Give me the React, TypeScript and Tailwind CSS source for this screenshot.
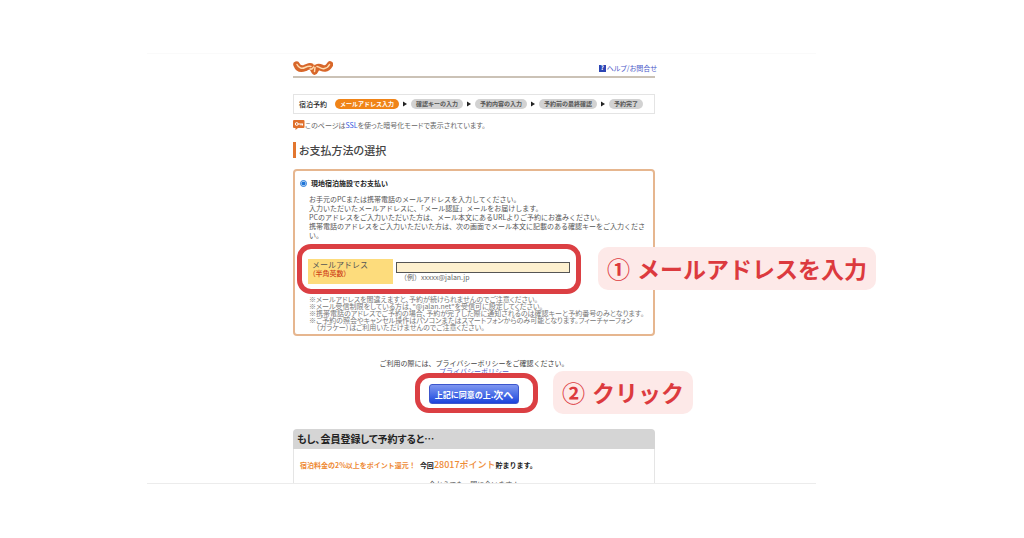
import type { ReactNode } from "react";

const STEPS = ["メールアドレス入力", "確認キーの入力", "予約内容の入力", "予約前の最終確認", "予約完了"];

function JalanLogo() {
  return (
    <svg viewBox="0 0 40 14" className="h-3.5 w-10" fill="none" strokeLinecap="round" strokeLinejoin="round" role="img" aria-label="じゃらん">
      <path
        d="M3.500 3.500C5 7.500 8 8.500 12 7C15 5.500 17 4.500 19 6L21.500 10.500L24 6.500C27 4.500 29 8 32 7.500C35 7 36 5 37 3.500"
        stroke="#d8672a"
        strokeWidth="6.500"
      />
      <path d="M4 3.500C6 7.500 9 8 12 6.500C14 5.500 16 4.500 18 5.500M17 8C19 8.500 20 7.500 20.500 6M22 6.500L21.500 10.500M24 5.500C27 6 28 8.500 31.500 7.500C34 7 35.500 5.500 36.500 3.500" stroke="#ffdcb0" strokeWidth="1.500" />
      <path d="M21 3v1" stroke="#ffdcb0" strokeWidth="1" />
    </svg>
  );
}

function KeyBubble() {
  return (
    <svg viewBox="0 0 12 10" className="h-2.5 w-3 shrink-0" aria-hidden="true">
      <path d="M1 0h9.500a1 1 0 0 1 1 1v6a1 1 0 0 1-1 1H5L2.500 10V8H1a1 1 0 0 1-1-1V1a1 1 0 0 1 1-1z" fill="#e0702c" />
      <circle cx="3.700" cy="4" r="1.400" fill="none" stroke="#fff" />
      <path d="M5 4h5M8 4v1.500M9.500 4v1.500" stroke="#fff" fill="none" />
    </svg>
  );
}

function Steps() {
  return (
    <nav className="mt-4 flex h-5 items-center border border-[#e4e4e4] pl-[5px] text-[7px] leading-[9px]">
      <span className="mr-2 font-medium text-[#222]">宿泊予約</span>
      <ol className="flex items-center text-[6px] font-bold">
        {STEPS.map((step, i) => (
          <li key={step} className="flex items-center">
            {i > 0 && (
              <svg viewBox="0 0 4 6" className="mx-1 h-1.5 w-1" aria-hidden="true">
                <path d="M0 0.500L4 3L0 5.500z" fill="#222" />
              </svg>
            )}
            <span
              className={
                i === 0
                  ? "rounded-full bg-[#f08418] px-[5px] py-px leading-[8px] text-white"
                  : "rounded-full bg-[#d2d2d2] px-[5px] py-px leading-[8px] text-[#555]"
              }
            >
              {step}
            </span>
          </li>
        ))}
      </ol>
    </nav>
  );
}

function Callout({ mark, children }: { mark: string; children: ReactNode }) {
  return (
    <p className="flex h-[43px] items-center gap-[7px] whitespace-nowrap rounded-[10px] bg-[#fde9e8] px-[9px] text-[23px] leading-none font-bold text-[#dc3a3e]">
      <span>{mark}</span>
      <span>{children}</span>
    </p>
  );
}

function PaymentForm() {
  return (
    <section className="mt-[11px] rounded border-2 border-[#e6b68f] pt-2 pr-2 pb-[3px] pl-[13px]">
      <label className="-ml-2 flex h-[9px] items-center gap-1 text-[7px] leading-[9px] font-bold text-[#222]">
        <input type="radio" name="payment" defaultChecked className="size-[7px] accent-[#1f75d8]" />
        現地宿泊施設でお支払い
      </label>
      <p className="mt-[7px] ml-px text-[7px] leading-[9px] text-[#555]">
        お手元のPCまたは携帯電話のメールアドレスを入力してください。
        <br />
        入力いただいたメールアドレスに、「メール認証」メールをお届けします。
        <br />
        PCのアドレスをご入力いただいた方は、メール本文にあるURLよりご予約にお進みください。
        <br />
        携帯電話のアドレスをご入力いただいた方は、次の画面でメール本文に記載のある確認キーをご入力ください。
      </p>

      <div className="relative mt-[19px] mr-[75px] flex gap-[3px]">
        <label htmlFor="email" className="flex h-[25px] w-[85px] shrink-0 flex-col bg-[#fddc7c] pt-0.5 pl-1 text-[8px] leading-[8px] text-[#555]">
          メールアドレス
          <span className="text-[7px] font-medium text-[#d0451b] [font-feature-settings:'palt']">（半角英数）</span>
        </label>
        <div className="flex-1 pt-[3px]">
          <input
            id="email"
            type="email"
            className="block h-[11px] w-full border border-[#555] bg-[#fdf0cf] px-1 text-[7px]"
          />
          <p className="pl-1 text-[7px] leading-[9px] text-[#666]">（例）xxxxx@jalan.jp</p>
        </div>
        <div className="pointer-events-none absolute -inset-x-[11px] -top-[15px] -bottom-[10px] rounded-[14px] border-[5px] border-[#db3f43]" />
        <div className="absolute -top-3 left-full ml-7">
          <Callout mark="①">メールアドレスを入力</Callout>
        </div>
      </div>

      <ul className="mt-3 ml-px text-[7px] leading-[7px] text-[#777] [font-feature-settings:'palt']">
        <li>※メールアドレスを間違えますと、予約が続けられませんのでご注意ください。</li>
        <li>※メール受信制限をしている方は、"@jalan.net"を受信可に設定してください。</li>
        <li>※携帯電話のアドレスでご予約の場合、予約が完了した際に通知されるのは確認キーと予約番号のみとなります。</li>
        <li className="pl-[7px] -indent-[7px]">
          ※ご予約の照会やキャンセル操作はパソコンまたはスマートフォンからのみ可能となります。フィーチャーフォン
          <br />
          （ガラケー）はご利用いただけませんのでご注意ください。
        </li>
      </ul>
    </section>
  );
}

function Agreement() {
  return (
    <div className="mt-[23px] flex flex-col items-center text-[7px] leading-[9px] text-[#444]">
      <p>ご利用の際には、プライバシーポリシーをご確認ください。</p>
      <a href="#privacy" className="leading-[7px] text-[#5560c4]">
        プライバシーポリシー
      </a>
      <div className="relative mt-[9px]">
        <button
          type="submit"
          className="flex h-5 w-[90px] items-center justify-center rounded-[3px] border border-[#3c56cc] bg-linear-to-b from-[#7f96f0] to-[#1c42dc] font-bold whitespace-nowrap text-white"
        >
          <span className="text-[8px]">上記に同意の上.</span>
          <span className="text-[10px]">次へ</span>
        </button>
        <div className="pointer-events-none absolute -top-[11px] -right-[19px] -bottom-[9px] -left-[14px] rounded-[14px] border-[5px] border-[#db3f43]" />
        <div className="absolute -top-[13px] left-full ml-[34px]">
          <Callout mark="②">クリック</Callout>
        </div>
      </div>
    </div>
  );
}

function MemberOffer() {
  return (
    <section className="mt-[25px]">
      <h2 className="h-5 rounded-t bg-[#d5d5d5] pl-1 text-[10px] leading-5 font-bold text-[#222] [font-feature-settings:'palt']">
        もし、会員登録して予約すると…
      </h2>
      <div className="border-x border-[#e5e5e5] pt-[11px]">
        <p className="flex items-center pl-1.5 text-[7px] leading-[10px] font-bold text-[#222]">
          <span className="mr-1 text-[#ee8a35]">宿泊料金の2%以上をポイント還元！</span>
          今回
          <span className="text-[9px] font-medium text-[#ee8a35]">28017ポイント</span>
          貯まります。
        </p>
        <p className="mt-2.5 h-[3px] overflow-hidden text-center text-[7px] leading-[9px] text-[#555]">
          今からでも、間に合います！
        </p>
      </div>
    </section>
  );
}

export default function App() {
  return (
    <div className="min-h-screen bg-white px-4 pt-[53px] font-['Noto_Sans_CJK_JP',sans-serif] md:pl-[147px]">
      <main className="max-w-[669px] border-y border-t-[#fafafa] border-b-[#ececec] md:pl-[146px]">
        <div className="max-w-[362px]">
          <header className="flex h-6 items-center justify-between border-b-2 border-[#cbc2b6] pt-1.5">
            <JalanLogo />
            <a href="#help" className="-mr-0.5 flex items-center gap-px text-[7px] leading-[9px] text-[#4a58c8] [font-feature-settings:'palt']">
              <span className="flex size-[7px] items-center justify-center bg-[#2c45b4] text-[6px] leading-none font-bold text-white">?</span>
              ヘルプ/お問合せ
            </a>
          </header>

          <Steps />

          <p className="mt-1.5 flex h-2.5 items-center text-[7px] leading-[10px] text-[#666] [font-feature-settings:'palt']">
            <KeyBubble />
            <span>
              このページは
              <a href="#ssl" className="text-[#3557e0]">SSL</a>
              を使った暗号化モードで表示されています。
            </span>
          </p>

          <h1 className="mt-3 h-4 border-l-[3px] border-[#e2762f] pl-[3px] text-[11px] leading-4 font-medium text-[#444] [font-feature-settings:'palt']">
            お支払方法の選択
          </h1>

          <PaymentForm />
          <Agreement />
          <MemberOffer />
        </div>
      </main>
    </div>
  );
}
